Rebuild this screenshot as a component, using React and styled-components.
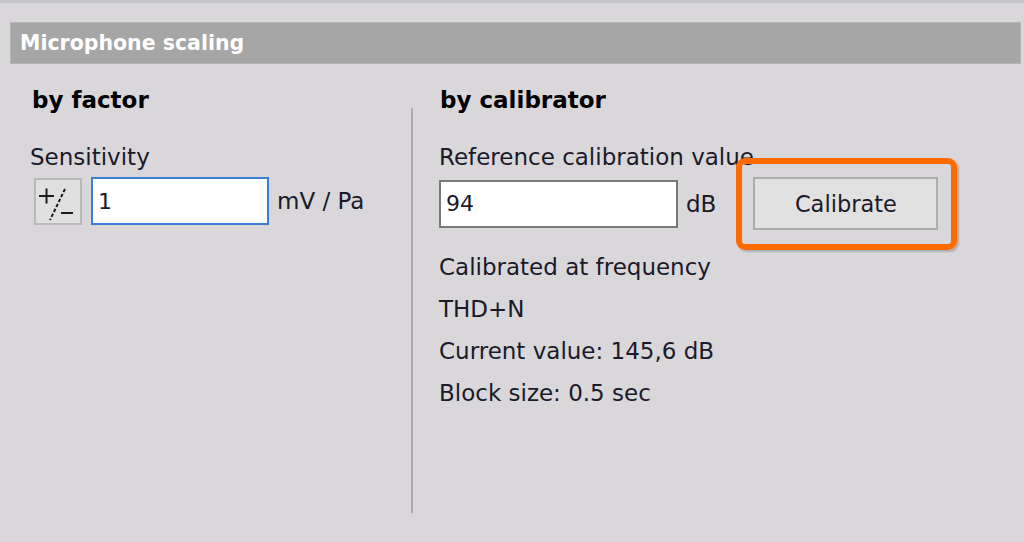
import React from "react";
import styled, { createGlobalStyle } from "styled-components";

const GlobalStyle = createGlobalStyle`
  html, body {
    margin: 0;
    padding: 0;
    background: #d9d7da;
  }
  body {
    font-family: "DejaVu Sans", "Liberation Sans", sans-serif;
    color: #1a1a2a;
  }
`;

const Window = styled.div`
  height: 542px;
  box-sizing: border-box;
  border-top: 3px solid #c6c5c7;
  padding: 19px 3px 0 10px;
  overflow: hidden;
`;

const Header = styled.div`
  height: 42px;
  box-sizing: border-box;
  background: #a6a6a6;
  border: 1px solid #b4b4b4;
  color: #ffffff;
  font-weight: bold;
  font-size: 20.5px;
  line-height: 41px;
  padding-left: 9px;
`;

const Columns = styled.div`
  display: grid;
  grid-template-columns: 401px 2px 1fr;
`;

const Column = styled.div`
  padding: 23px 0 0 ${(props) => props.$indent}px;
`;

const Divider = styled.div`
  width: 2px;
  height: 405px;
  margin-top: 44px;
  background: #ababab;
`;

const Title = styled.div`
  font-weight: bold;
  font-size: 23px;
  line-height: 26px;
  color: #000;
  margin-left: ${(props) => props.$shift || 0}px;
`;

const Label = styled.div`
  font-size: 23px;
  line-height: 26px;
  margin-top: ${(props) => props.$top}px;
`;

const Row = styled.div`
  display: flex;
  align-items: center;
  margin-top: 7px;
`;

const SignButton = styled.button`
  width: 48px;
  height: 47px;
  box-sizing: border-box;
  margin: 0 9px 0 4px;
  padding: 0;
  background: #e0e0e0;
  border: 2px solid #b9b9b9;
  display: flex;
  align-items: center;
  justify-content: center;
`;

const Field = styled.input`
  width: ${(props) => props.$width}px;
  height: 48px;
  box-sizing: border-box;
  border: 2px solid ${(props) => (props.$focused ? "#3d7fd6" : "#7a7a7a")};
  background: #fff;
  font-family: inherit;
  font-size: 22px;
  color: #1a1a2a;
  padding: 0 5px;
  outline: none;
`;

const Unit = styled.span`
  font-size: 23px;
  margin-left: 8px;
`;

/* orange callout framing the calibrate button */
const Callout = styled.div`
  position: relative;
  margin-left: 37px;

  &::before {
    content: "";
    position: absolute;
    left: -17px;
    right: -19px;
    top: -19px;
    bottom: -20px;
    border: 6px solid #ff6a00;
    border-radius: 9px;
    box-shadow: 2px 2px 2px rgba(0, 0, 0, 0.2);
    pointer-events: none;
  }
`;

const Button = styled.button`
  display: block;
  width: 185px;
  height: 53px;
  box-sizing: border-box;
  background: #e1e1e1;
  border: 2px solid #adadad;
  font-family: inherit;
  font-size: 22.5px;
  color: #1a1a2a;
  padding: 0;
`;

const InfoList = styled.div`
  display: flex;
  flex-direction: column;
  gap: 16px;
  margin-top: 24px;
`;

const Info = styled.div`
  font-size: 23px;
  line-height: 26px;
`;

function PlusMinus() {
  return (
    <svg width="44" height="43" viewBox="0 0 44 43">
      <g stroke="#1a1a1a" strokeWidth="2" fill="none">
        <path d="M3 16h15M10.5 8.5v15" />
        <path d="M29 9L14 40" strokeDasharray="3.5 2" />
        <path d="M25 33h12" />
      </g>
    </svg>
  );
}

export default function App() {
  return (
    <>
      <GlobalStyle />
      <Window>
        <Header>Microphone scaling</Header>
        <Columns>
          <Column $indent={20}>
            <Title $shift={2}>by factor</Title>
            <Label $top={31}>Sensitivity</Label>
            <Row>
              <SignButton>
                <PlusMinus />
              </SignButton>
              <Field $width={178} $focused defaultValue="1" />
              <Unit>mV / Pa</Unit>
            </Row>
          </Column>
          <Divider />
          <Column $indent={26}>
            <Title $shift={1}>by calibrator</Title>
            <Label $top={31}>Reference calibration value</Label>
            <Row>
              <Field $width={239} defaultValue="94" />
              <Unit>dB</Unit>
              <Callout>
                <Button>Calibrate</Button>
              </Callout>
            </Row>
            <InfoList>
              <Info>Calibrated at frequency</Info>
              <Info>THD+N</Info>
              <Info>Current value: 145,6 dB</Info>
              <Info>Block size: 0.5 sec</Info>
            </InfoList>
          </Column>
        </Columns>
      </Window>
    </>
  );
}
